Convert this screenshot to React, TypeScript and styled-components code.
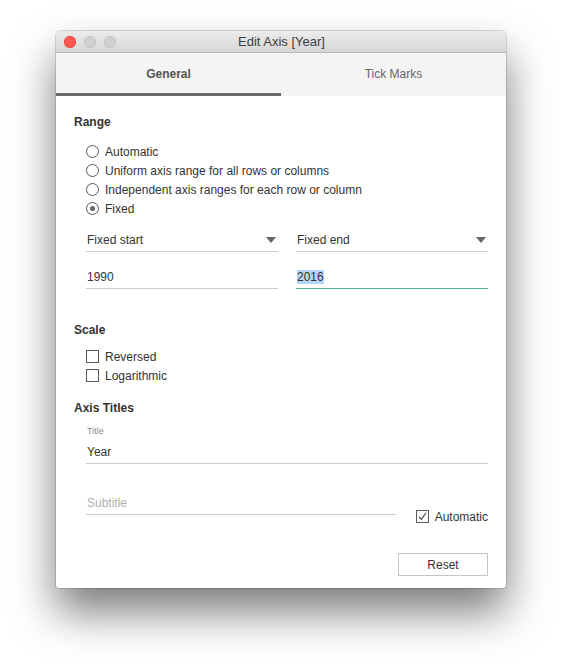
import React from "react";
import styled, { createGlobalStyle } from "styled-components";

const GlobalStyle = createGlobalStyle`
  html, body {
    margin: 0;
    padding: 0;
    background: #ffffff;
  }
  body {
    font-family: "Liberation Sans", Arial, sans-serif;
    -webkit-font-smoothing: antialiased;
  }
`;

const Page = styled.div`
  padding: 31px 0 0 56px;
  height: 669px;
  box-sizing: border-box;
`;

const Window = styled.div`
  width: 450px;
  background: #ffffff;
  border-radius: 5px 5px 3px 3px;
  overflow: hidden;
  box-shadow: 0 24px 44px rgba(0, 0, 0, 0.52), 0 0 0 1px rgba(0, 0, 0, 0.14);
`;

const TitleBar = styled.div`
  position: relative;
  height: 22px;
  box-sizing: border-box;
  background: linear-gradient(#ececec, #d6d6d6);
  border-bottom: 1px solid #b9b9b9;
  display: flex;
  align-items: center;
  justify-content: center;
`;

const Lights = styled.div`
  position: absolute;
  left: 8px;
  top: 5px;
  display: flex;
  gap: 8px;
`;

const Light = styled.span<{ $color: string; $border: string }>`
  width: 12px;
  height: 12px;
  border-radius: 50%;
  background: ${(p) => p.$color};
  box-shadow: inset 0 0 0 0.5px ${(p) => p.$border};
`;

const Title = styled.div`
  font-size: 13px;
  color: #3d3d3d;
  padding-left: 1px;
`;

const Tabs = styled.div`
  display: flex;
  height: 43px;
  background: #f4f4f4;
`;

const Tab = styled.div<{ $active?: boolean }>`
  flex: 1;
  display: flex;
  align-items: center;
  justify-content: center;
  font-size: 12px;
  color: ${(p) => (p.$active ? "#555" : "#666")};
  box-sizing: border-box;
  padding-top: 1px;
  border-bottom: 3px solid ${(p) => (p.$active ? "#6a6a6a" : "transparent")};
  ${(p) => (p.$active ? "font-weight: bold;" : "")}
`;

const Content = styled.div`
  padding: 18px 18px 12px 18px;
  display: flex;
  flex-direction: column;
  color: #333;
  font-size: 12px;
`;

const SectionTitle = styled.div<{ $mt?: number }>`
  font-weight: bold;
  font-size: 12px;
  line-height: 16px;
  color: #333;
  margin-top: ${(p) => p.$mt ?? 0}px;
`;

const OptionList = styled.div<{ $mt: number }>`
  display: flex;
  flex-direction: column;
  padding-left: 12px;
  margin-top: ${(p) => p.$mt}px;
`;

const Option = styled.label`
  display: flex;
  align-items: center;
  gap: 6px;
  height: 19px;
  font-size: 12px;
  color: #333;
`;

const Radio = styled.span<{ $checked?: boolean }>`
  width: 13px;
  height: 13px;
  box-sizing: border-box;
  border-radius: 50%;
  border: 1px solid #5a5a5a;
  display: flex;
  align-items: center;
  justify-content: center;
  &::after {
    content: "";
    display: ${(p) => (p.$checked ? "block" : "none")};
    width: 5px;
    height: 5px;
    border-radius: 50%;
    background: #666;
  }
`;

const Box = styled.span`
  width: 13px;
  height: 13px;
  box-sizing: border-box;
  border: 1px solid #5a5a5a;
  display: flex;
  align-items: center;
  justify-content: center;
`;

const FieldRow = styled.div<{ $mt: number }>`
  display: flex;
  gap: 18px;
  padding-left: 12px;
  margin-top: ${(p) => p.$mt}px;
`;

const Field = styled.div<{ $focus?: boolean; $width?: number }>`
  ${(p) => (p.$width ? `width: ${p.$width}px;` : "flex: 1;")}
  height: 24px;
  box-sizing: border-box;
  border-bottom: 1px solid ${(p) => (p.$focus ? "#48b59c" : "#cbcbcb")};
  display: flex;
  align-items: center;
  justify-content: space-between;
  padding: 0 2px 0 1px;
  font-size: 12px;
  color: #333;
`;

const Placeholder = styled.span`
  color: #b0b0b0;
`;

const Selected = styled.span`
  background: #b4d5fb;
`;

const Arrow = styled.span`
  width: 0;
  height: 0;
  border-left: 5px solid transparent;
  border-right: 5px solid transparent;
  border-top: 6px solid #666;
`;

const SmallLabel = styled.div`
  font-size: 9px;
  line-height: 12px;
  color: #8a8a8a;
  padding-left: 13px;
  margin-top: 9px;
`;

const SubtitleRow = styled.div`
  display: flex;
  align-items: flex-end;
  justify-content: space-between;
  padding-left: 12px;
  margin-top: 27px;
`;

const AutoOption = styled(Option)`
  margin-bottom: -11px;
`;

const Footer = styled.div`
  display: flex;
  justify-content: flex-end;
  margin-top: 38px;
`;

const Button = styled.button`
  width: 90px;
  height: 23px;
  border: 1px solid #c6c6c6;
  background: #ffffff;
  font-family: "Liberation Sans", Arial, sans-serif;
  font-size: 12px;
  color: #333;
  padding: 0;
`;

const Check = () => (
  <svg width="11" height="11" viewBox="0 0 11 11">
    <path d="M2 5.8 L4.4 8.4 L9 1.8" fill="none" stroke="#444" strokeWidth="1.1" />
  </svg>
);

export default function App() {
  return (
    <>
      <GlobalStyle />
      <Page>
        <Window>
          <TitleBar>
            <Lights>
              <Light $color="#fc5753" $border="#df3d39" />
              <Light $color="#d0d0d0" $border="#b9b9b9" />
              <Light $color="#d0d0d0" $border="#b9b9b9" />
            </Lights>
            <Title>Edit Axis [Year]</Title>
          </TitleBar>
          <Tabs>
            <Tab $active>General</Tab>
            <Tab>Tick Marks</Tab>
          </Tabs>
          <Content>
            <SectionTitle>Range</SectionTitle>
            <OptionList $mt={12}>
              <Option>
                <Radio />
                Automatic
              </Option>
              <Option>
                <Radio />
                Uniform axis range for all rows or columns
              </Option>
              <Option>
                <Radio />
                Independent axis ranges for each row or column
              </Option>
              <Option>
                <Radio $checked />
                Fixed
              </Option>
            </OptionList>
            <FieldRow $mt={10}>
              <Field>
                Fixed start
                <Arrow />
              </Field>
              <Field>
                Fixed end
                <Arrow />
              </Field>
            </FieldRow>
            <FieldRow $mt={13}>
              <Field>1990</Field>
              <Field $focus>
                <Selected>2016</Selected>
              </Field>
            </FieldRow>

            <SectionTitle $mt={33}>Scale</SectionTitle>
            <OptionList $mt={9}>
              <Option>
                <Box />
                Reversed
              </Option>
              <Option>
                <Box />
                Logarithmic
              </Option>
            </OptionList>

            <SectionTitle $mt={15}>Axis Titles</SectionTitle>
            <SmallLabel>Title</SmallLabel>
            <FieldRow $mt={3}>
              <Field>Year</Field>
            </FieldRow>
            <SubtitleRow>
              <Field $width={310}>
                <Placeholder>Subtitle</Placeholder>
              </Field>
              <AutoOption>
                <Box>
                  <Check />
                </Box>
                Automatic
              </AutoOption>
            </SubtitleRow>
            <Footer>
              <Button>Reset</Button>
            </Footer>
          </Content>
        </Window>
      </Page>
    </>
  );
}
